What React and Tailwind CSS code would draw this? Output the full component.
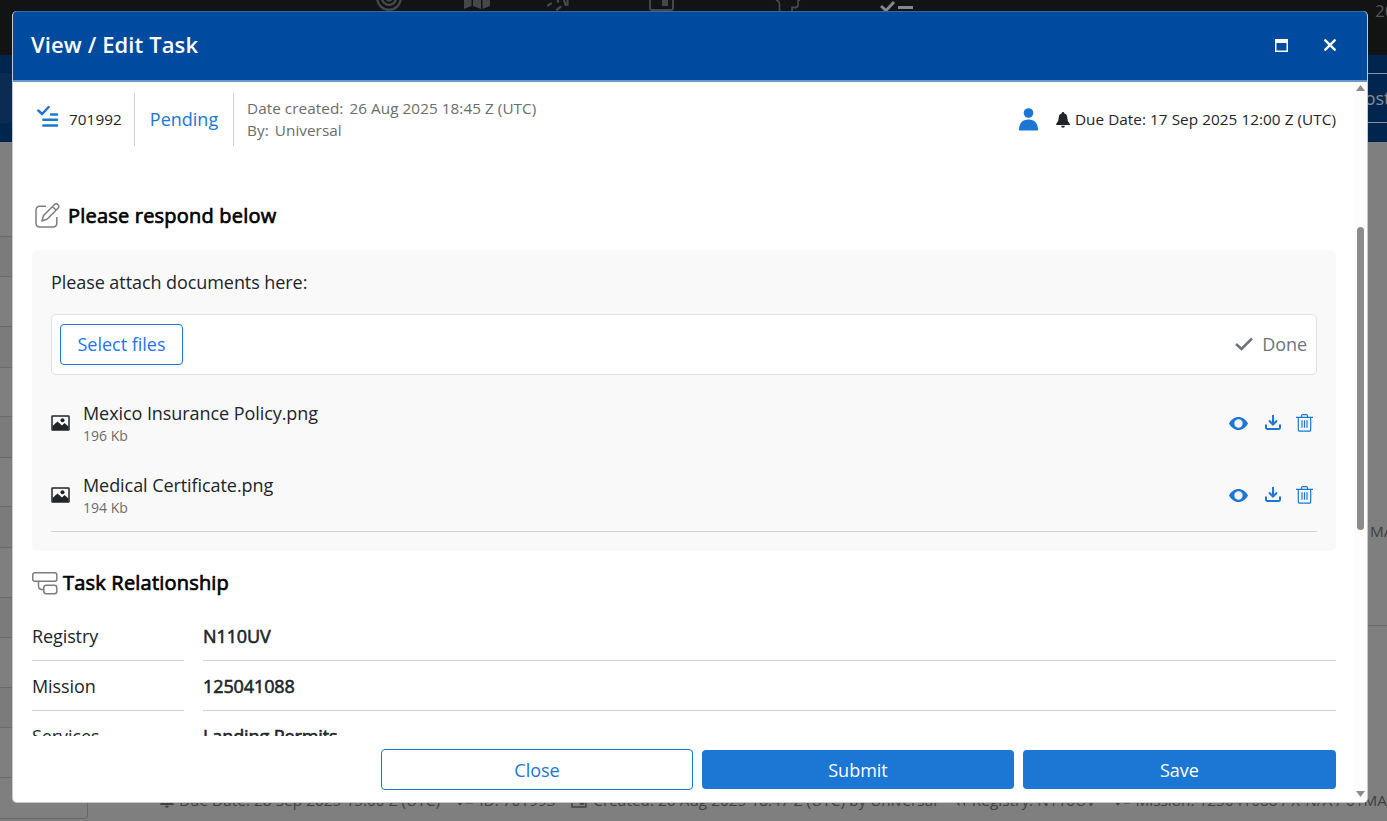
const files = [
  { name: 'Mexico Insurance Policy.png', size: '196 Kb' },
  { name: 'Medical Certificate.png', size: '194 Kb' },
];

const relations = [
  { label: 'Registry', value: 'N110UV' },
  { label: 'Mission', value: '125041088' },
  { label: 'Services', value: 'Landing Permits' },
];

const sideRows = ['h-[95px]', 'h-[40px]', 'h-[50px]', 'h-[41px]', 'h-[49px]', 'h-[41px]', 'h-[49px]', 'h-[41px]', 'h-[50px]', 'h-[40px]', 'h-[50px]', 'h-[40px]', 'h-[50px]'];

function NavIcons() {
  return (
    <div className="flex pl-[376px] text-[#464848]">
      <svg className="w-[26px] h-[26px] -mt-[15px]" viewBox="0 0 26 26" fill="none" stroke="currentColor" strokeWidth="2.4">
        <circle cx="13" cy="13" r="11.8" />
        <circle cx="13" cy="13" r="7" />
        <circle cx="13" cy="13" r="2.5" />
      </svg>
      <svg className="w-[26px] h-[26px] ml-[62px] -mt-[16px]" viewBox="0 0 26 26" fill="currentColor">
        <path d="M0 3 7.5 0v22L0 25zM9 0l8 3v22l-8-3zM18.5 3 26 0v22l-7.5 3z" />
      </svg>
      <svg className="w-[26px] h-[12px] ml-[56px]" viewBox="0 0 26 12" fill="none" stroke="currentColor" strokeWidth="2.2" strokeLinecap="round">
        <path d="M2 5.5l3-2M11 9.5l3.500-2.500M12 0v2M18 0l1.500 5M21.500 0v5" />
      </svg>
      <svg className="w-[25px] h-[26px] ml-[77px] -mt-[15px]" viewBox="0 0 25 26" fill="none" stroke="currentColor" strokeWidth="2">
        <rect x="1" y="1" width="23" height="24" rx="2" />
        <path fill="currentColor" stroke="none" d="M13 13h6v8h-6z" />
      </svg>
      <svg className="w-[26px] h-[12px] ml-[101px]" viewBox="0 0 26 12" fill="none" stroke="currentColor" strokeWidth="1.8">
        <path d="M1 0q3.500 1 3.500 4v8M17 12V7.5h3.500q2.500 0 2.500-3V1l2-1" />
      </svg>
      <svg className="w-[34px] h-[12px] ml-[79px] text-[#878787]" viewBox="0 0 34 12" fill="none" stroke="currentColor" strokeWidth="3">
        <path d="m1 6 5 4.5 8-8.5M18 7.5h15" />
      </svg>
    </div>
  );
}

function CheckDashIcon() {
  return (
    <svg className="w-[17px] h-3 mt-[2px]" viewBox="0 0 17 12" fill="none" stroke="currentColor" strokeWidth="2.2">
      <path d="m1 5.500 3 3.500 4-5M10 7.500h7" />
    </svg>
  );
}

function BellIcon({ className }) {
  return (
    <svg className={className} viewBox="0 0 14 16" fill="currentColor">
      <path d="M7 0q1.300 0 1.400 1.400 2.800.8 2.900 4.300 0 4 2.500 6.300.4 1-.4 1H.6q-.8 0-.4-1 2.500-2.300 2.500-6.300.1-3.500 2.900-4.300Q5.700 0 7 0M5 13.800h4Q8.700 15.800 7 15.800T5 13.800" />
    </svg>
  );
}

function Backdrop() {
  return (
    <div className="h-full bg-[#7f7f7f] overflow-hidden">
      <div className="h-[55px] bg-[#111413] flex justify-between">
        <NavIcons />
        <span className="w-[12px] text-[17px] leading-[22px] text-[#555656] whitespace-nowrap">20</span>
      </div>
      <div className="h-[87px] bg-[#00254f] py-[18px]">
        <div className="flex justify-between h-[50px]">
          <div className="w-[120px] bg-[#0c2b52]" />
          <div className="w-[50px] border-y border-[#8a939d] pl-[17px] text-[18px] tracking-[-0.05px] leading-[49px] text-[#888b90] whitespace-nowrap">Post</div>
        </div>
      </div>
      <div className="flex justify-between h-[648px]">
        <div className="w-[88px] h-[677px] border-r border-b border-[#686868] rounded-br">
          {sideRows.map((h, i) => (
            <div key={i} className={`${h} border-b border-[#686a6c] ${i % 2 ? 'bg-[#7b7b7b]' : ''}`} />
          ))}
        </div>
        <div className="w-[30px] h-[484px] border-b border-[#686868] pt-[378px] pl-[13px] text-[15.3px] leading-[22px] text-[#414141] whitespace-nowrap">MA</div>
      </div>
      <div className="flex items-center -mt-px pl-[160px] h-[22px] text-[15.3px] tracking-[0.05px] leading-[22px] text-[#414141] whitespace-nowrap">
        <BellIcon className="w-[14px] h-[16px] mr-[5px]" />
        <span className="w-[280px]">Due Date: 28 Sep 2025 15:00 Z (UTC)</span>
        <CheckDashIcon />
        <span className="w-[93px] ml-[6px]">ID: 701993</span>
        <svg className="w-[16px] h-[15px]" viewBox="0 0 16 15" fill="none" stroke="currentColor" strokeWidth="1.5">
          <path d="M1 1h14v13H1zM1 4h14" />
          <path fill="currentColor" d="M9.5 7h3v4h-3z" />
        </svg>
        <span className="w-[363px] ml-[6px]">Created: 26 Aug 2025 18:47 Z (UTC) by Universal</span>
        <svg className="w-[13px] h-3 mt-[2px]" viewBox="0 0 14 12" fill="currentColor">
          <path d="M0 5h6V0l3 5 4 1v6l-3-5H7v5L4 8z" />
        </svg>
        <span className="w-[143px] ml-[6px]">Registry: N110UV</span>
        <CheckDashIcon />
        <span className="ml-[5px]">Mission: 125041088 / X-N/A / 01MA</span>
      </div>
    </div>
  );
}

function FileRow({ file }) {
  return (
    <div className="h-[72px] flex items-center justify-between pr-1">
      <div className="flex items-center">
        <svg className="w-[19px] h-[16px] text-[#212529]" viewBox="0 0 19 16" fill="none">
          <rect x="1" y="1" width="17" height="14" rx="0.5" stroke="currentColor" strokeWidth="1.5" />
          <path d="M1.5 15v-4l5-4.500 4.500 4L13.500 8l4 3.500V15z" fill="currentColor" />
          <circle cx="11.5" cy="5.3" r="2" fill="currentColor" />
        </svg>
        <div className="ml-[13px]">
          <div className="text-[18px] tracking-[-0.07px] leading-[26px] -mt-px">{file.name}</div>
          <div className="text-[14px] leading-[20px] text-[#6c6c6c]">{file.size}</div>
        </div>
      </div>
      <div className="flex items-center text-[#1b76d4]">
        <svg className="w-[19px] h-[13px]" viewBox="0 0 19 13" fill="currentColor" fillRule="evenodd">
          <path d="M0 6.500C2.200 2.500 5.500 0 9.500 0S16.800 2.500 19 6.500C16.800 10.500 13.500 13 9.500 13S2.200 10.500 0 6.500M9.500 2.300a4.200 4.200 0 1 0 0 8.400 4.200 4.200 0 0 0 0-8.400" />
        </svg>
        <svg className="w-[16px] h-[16px] ml-[17px] -mt-px" viewBox="0 0 16 16" fill="none" stroke="currentColor" strokeWidth="2">
          <path d="M8 0v9.500M4 5.500l4 4 4-4M1 9.500v3a1.500 1.500 0 0 0 1.500 1.500h11a1.500 1.500 0 0 0 1.500-1.500v-3" />
        </svg>
        <svg className="w-[17px] h-[18px] ml-[15px]" viewBox="0 0 17 18" fill="none" stroke="currentColor" strokeWidth="1.2">
          <path d="M0 3.400h17M5.500 3V2q0-1.300 1.300-1.300h3.400q1.300 0 1.300 1.300v1M2.300 3.500v11.700q0 2 2 2h8.400q2 0 2-2V3.500M6 6.300v7.500M8.500 6.300v7.500M11 6.300v7.500" />
        </svg>
      </div>
    </div>
  );
}

function TaskSummary() {
  return (
    <div className="flex items-center justify-between h-[53px] mt-[11px]">
      <div className="flex h-full items-center">
        <svg className="w-[22px] h-[22px] ml-[5px] -mt-[7px] text-[#1b76d4]" viewBox="0 0 22 22" fill="none" stroke="currentColor" strokeWidth="2.4" strokeLinecap="round">
          <path d="m1.300 5.500 3.800 3.500 6.600-7M14 9.500h6M6.300 14.800H20M6.300 20.500H20" />
        </svg>
        <span className="ml-[10px] w-[53px] text-[15.3px] tracking-[0.05px]">701992</span>
        <div className="h-full w-px bg-[#ced0d2] ml-[12px]" />
        <span className="w-[98px] text-center text-[18px] text-[#1b76d4]">Pending</span>
        <div className="h-full w-px bg-[#ced0d2]" />
        <div className="ml-[13px] -mt-[2px] text-[15.3px] tracking-[0.05px] leading-[22px] text-[#6c6c6c]">
          <div>Date created: <span className="ml-[2px]">26 Aug 2025 18:45 Z (UTC)</span></div>
          <div>By: <span className="ml-[2px]">Universal</span></div>
        </div>
      </div>
      <div className="flex items-center text-[15.3px] tracking-[0.05px]">
        <svg className="w-[19px] h-[23px]" viewBox="0 0 19 23" fill="#1b76d4">
          <circle cx="9.5" cy="5" r="4.8" />
          <path d="M0 22.500q0-11 9.500-11t9.500 11z" />
        </svg>
        <BellIcon className="w-[14px] h-[16px] ml-[18px] mr-[5px]" />
        Due Date: 17 Sep 2025 12:00 Z (UTC)
      </div>
    </div>
  );
}

export default function App() {
  return (
    <div className="relative w-full h-[821px] overflow-hidden font-['Open_Sans','Noto_Sans',sans-serif]">
      <Backdrop />

      <div className="absolute left-[12px] top-[11px] w-[1356px] h-[792px] flex flex-col rounded-[5px] overflow-hidden bg-white text-[#212529] border border-[#c4c8cc] border-t-0">
        <header className="h-[71px] shrink-0 -mx-px px-[18px] flex items-center justify-between bg-[#004a9f] border border-[#2e69ae] border-b-2 border-b-[#6c97c8] rounded-t-[5px] text-white">
          <h1 className="text-[22px] font-semibold tracking-[0.1px] leading-none -mt-[4px]">View / Edit Task</h1>
          <div className="flex items-center mr-[13px] -mt-[2px]">
            <svg className="w-[13px] h-[13px]" viewBox="0 0 13 13" fill="none" stroke="currentColor">
              <path d="M.75 0v12.250h11.500V0" strokeWidth="1.5" />
              <path d="M0 2h13" strokeWidth="4" />
            </svg>
            <svg className="w-[12px] h-[12px] ml-[36px]" viewBox="0 0 12 12" fill="none" stroke="currentColor" strokeWidth="2.4" strokeLinecap="round">
              <path d="m1.300 1.300 9.400 9.400M10.700 1.300 1.300 10.700" />
            </svg>
          </div>
        </header>

        <div className="flex flex-1 min-h-0">
          <div className="flex-1 flex flex-col pl-[19px] pr-[18px]">
            <div className="h-[654px] overflow-hidden">
              <TaskSummary />

              <div className="flex items-center mt-[54px] h-[32px]">
                <svg className="w-[25px] h-[25px] ml-[3px] -mt-[2px]" viewBox="0 0 25 25" fill="none" stroke="#7d7d7d" strokeWidth="1.5" strokeLinejoin="round">
                  <path d="M11 3.200H4.500A3.500 3.500 0 0 0 1 6.700v13.800A3.500 3.500 0 0 0 4.500 24h13.800a3.500 3.500 0 0 0 3.500-3.500V14" />
                  <path d="m7 18 1.500-5.500L19.300 1.700a2.300 2.300 0 0 1 3.700 0 2.300 2.300 0 0 1 0 3.500L12.300 16zM17.500 3.500l3.700 3.700" />
                </svg>
                <h2 className="ml-[8px] text-[20px] tracking-[0.2px] text-black [-webkit-text-stroke:0.7px_black]">Please respond below</h2>
              </div>

              <section className="mt-[18px] h-[301px] rounded-[6px] bg-[#f9f9f9] px-[19px] pt-[19px]">
                <p className="text-[18px] tracking-[-0.07px] leading-[27px]">Please attach documents here:</p>
                <div className="mt-[18px] h-[61px] px-2 flex items-center justify-between bg-white border border-[#dee1e5] rounded-[5px]">
                  <button className="w-[123px] h-[41px] border border-[#1b76d4] rounded text-[18px] tracking-[-0.01px] text-[#1f74f5]">Select files</button>
                  <div className="flex items-center text-[18px] tracking-[-0.1px] text-[#6c757d] pr-px">
                    <svg className="w-[18px] h-[14px] mr-[9px] -mt-px" viewBox="0 0 18 14" fill="none" stroke="currentColor" strokeWidth="2.5">
                      <path d="m1 7 5.500 5L17 1.500" />
                    </svg>
                    Done
                  </div>
                </div>
                <div className="mt-[12px] border-b border-[#d2d2d2]">
                  {files.map((file) => <FileRow key={file.name} file={file} />)}
                </div>
              </section>

              <div className="flex items-center mt-[16px] h-[32px]">
                <svg className="w-[26px] h-[23px]" viewBox="0 0 26 23" fill="none" stroke="#7d7d7d" strokeWidth="1.5">
                  <rect x="0.8" y="0.8" width="24" height="8.4" rx="2" />
                  <rect x="11.8" y="13.3" width="13" height="8.4" rx="2.5" />
                  <path d="M6.500 9v5q0 3.500 3.500 3.500h2" />
                </svg>
                <h2 className="ml-[5px] text-[20px] tracking-[0.2px] text-black [-webkit-text-stroke:0.7px_black]">Task Relationship</h2>
              </div>

              <dl className="mt-[12px] grid grid-cols-[152px_1fr] gap-x-[19px] text-[18px] tracking-[-0.1px]">
                {relations.map((r) => (
                  <div key={r.label} className="contents">
                    <dt className="h-[50px] leading-[50px] border-b border-[#d2d2d2]">{r.label}</dt>
                    <dd className="h-[50px] leading-[50px] border-b border-[#d2d2d2] [-webkit-text-stroke:0.6px_#212529]">{r.value}</dd>
                  </div>
                ))}
              </dl>
            </div>

            <footer className="flex items-center justify-end gap-[9px] pt-[12px] pb-px text-[18px]">
              <button className="w-[312px] h-[41px] pt-[2px] border border-[#1b76d4] rounded text-[#1b76d4] mt-px">Close</button>
              <button className="w-[312px] h-[39px] pt-[2px] bg-[#1b76d4] rounded text-white mt-px">Submit</button>
              <button className="w-[313px] h-[39px] pt-[2px] bg-[#1b76d4] rounded text-white mt-px">Save</button>
            </footer>
          </div>

          {/* scrollbar */}
          <div className="w-[13px] bg-[#fcfcfc] flex flex-col items-center pr-px pt-[3px] pb-[5px]">
            <svg className="w-[9px] h-[6px]" viewBox="0 0 9 6" fill="#8b8b8b"><path d="M0 6 4.500 0 9 6z" /></svg>
            <div className="w-[7px] h-[303px] mt-[136px] rounded-full bg-[#8b8b8b]" />
            <svg className="w-[9px] h-[6px] mt-auto" viewBox="0 0 9 6" fill="#8b8b8b"><path d="M0 0h9L4.500 6z" /></svg>
          </div>
        </div>
      </div>
    </div>
  );
}
